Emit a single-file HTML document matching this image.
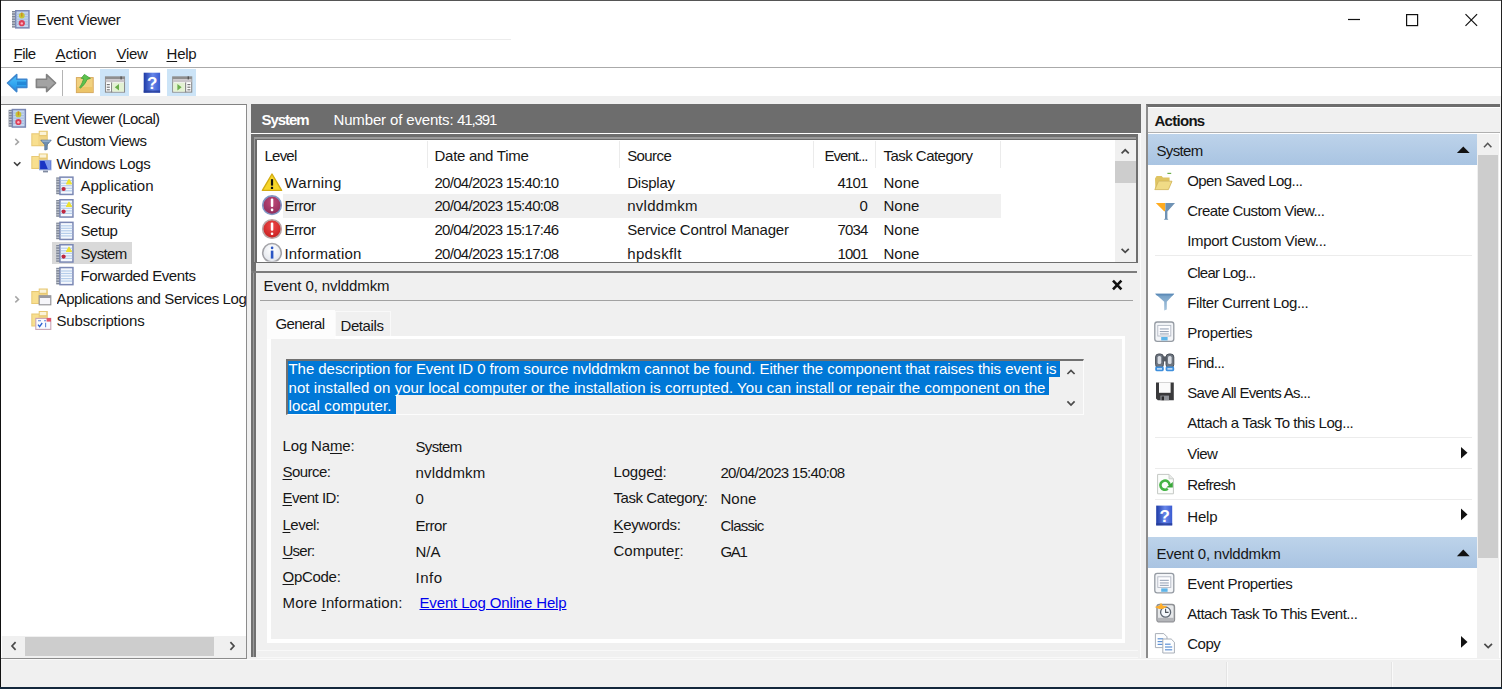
<!DOCTYPE html>
<html lang="en">
<head>
<meta charset="utf-8">
<title>Event Viewer</title>
<style>
html,body{margin:0;padding:0;}
body{width:1502px;height:689px;overflow:hidden;background:#f0f0f0;position:relative;
 font-family:"Liberation Sans",sans-serif;font-size:15px;color:#000;}
.b{position:absolute;box-sizing:border-box;}
.t{position:absolute;white-space:pre;line-height:20px;height:20px;color:#161616;}
.t u{text-decoration:underline;text-underline-offset:2px;text-decoration-thickness:1px;}
svg{position:absolute;overflow:visible;}
</style>
</head>
<body>
<div class="b" style="left:0px;top:0px;width:1502px;height:39px;background:#fff;"></div>
<div class="b" style="left:0px;top:39px;width:1502px;height:28px;background:#fff;"></div>
<div class="b" style="left:0px;top:39px;width:511px;height:1px;background:#ececec;"></div>
<div class="b" style="left:0px;top:67px;width:1502px;height:1px;background:#aaaaaa;"></div>
<div class="b" style="left:0px;top:68px;width:1502px;height:28px;background:#fff;"></div>
<div class="b" style="left:99.8px;top:69px;width:28.8px;height:27.2px;background:#cce4f7;"></div>
<div class="b" style="left:167.2px;top:69px;width:28.8px;height:27.2px;background:#cce4f7;"></div>
<div class="b" style="left:62px;top:70px;width:1px;height:26px;background:#b4b4b4;"></div>
<div class="b" style="left:1px;top:104px;width:246px;height:555px;background:#fff;border-top:1px solid #828282;border-right:1px solid #8c8c8c;border-bottom:1px solid #8c8c8c;"></div>
<div class="b" style="left:52px;top:242px;width:80px;height:22px;background:#d9d9d9;"></div>
<div class="b" style="left:2px;top:636.4px;width:244px;height:21.6px;background:#f0f0f0;"></div>
<div class="b" style="left:25px;top:636.5px;width:188.6px;height:19.4px;background:#cdcdcd;"></div>
<div class="b" style="left:251px;top:104px;width:890px;height:29px;background:#6d6d6d;"></div>
<div class="b" style="left:251px;top:133px;width:890px;height:1px;background:#fff;"></div>
<div class="b" style="left:251px;top:134px;width:886.5px;height:129px;background:#6e6e6e;"></div>
<div class="b" style="left:253.5px;top:136.6px;width:882px;height:125px;background:#9a9a9a;"></div>
<div class="b" style="left:254.8px;top:138.6px;width:881px;height:123px;background:#6b6b6b;"></div>
<div class="b" style="left:257px;top:140px;width:878.6px;height:121.6px;background:#fff;"></div>
<div class="b" style="left:283px;top:194px;width:718px;height:23.6px;background:#f0f0f0;"></div>
<div class="b" style="left:427px;top:141px;width:1px;height:27px;background:#ebebeb;"></div>
<div class="b" style="left:619px;top:141px;width:1px;height:27px;background:#ebebeb;"></div>
<div class="b" style="left:813px;top:141px;width:1px;height:27px;background:#ebebeb;"></div>
<div class="b" style="left:875px;top:141px;width:1px;height:27px;background:#ebebeb;"></div>
<div class="b" style="left:1000px;top:141px;width:1px;height:27px;background:#ebebeb;"></div>
<div class="b" style="left:1115.4px;top:140px;width:20.2px;height:121.6px;background:#f0f0f0;"></div>
<div class="b" style="left:1115.4px;top:161px;width:20.2px;height:22px;background:#cdcdcd;"></div>
<div class="b" style="left:251.2px;top:263px;width:5px;height:394px;background:#707070;"></div>
<div class="b" style="left:253px;top:272px;width:1.4px;height:385px;background:#9a9a9a;"></div>
<div class="b" style="left:251.2px;top:270.6px;width:886.3px;height:2px;background:#7c7c7c;"></div>
<div class="b" style="left:1140px;top:134px;width:1px;height:524px;background:#fafafa;"></div>
<div class="b" style="left:259.6px;top:299.6px;width:873px;height:1.7px;background:#a2a2a2;"></div>
<div class="b" style="left:266.8px;top:336.4px;width:858.4px;height:306.8px;background:#fff;"></div>
<div class="b" style="left:266.8px;top:309.6px;width:68.5px;height:29.8px;background:#fdfdfd;"></div>
<div class="b" style="left:335.3px;top:311.2px;width:56px;height:25.2px;background:#f0f0f0;border:1px solid #f9f9f9;border-bottom:none;"></div>
<div class="b" style="left:271.2px;top:339.4px;width:850.4px;height:300px;background:#f0f0f0;"></div>
<div class="b" style="left:257px;top:650px;width:881px;height:1px;background:#f8f8f8;"></div>
<div class="b" style="left:257px;top:656.6px;width:881px;height:1px;background:#f8f8f8;"></div>
<div class="b" style="left:285.6px;top:358.6px;width:798px;height:56.6px;background:#f0f0f0;border-top:2.2px solid #707070;border-left:2.4px solid #707070;border-right:1px solid #fcfcfc;border-bottom:1px solid #fcfcfc;"></div>
<div class="b" style="left:288px;top:360.8px;width:771.6px;height:15.8px;background:#0078d7;"></div>
<div class="b" style="left:288px;top:376.5px;width:760.6px;height:18.8px;background:#0078d7;"></div>
<div class="b" style="left:288px;top:395.2px;width:108.3px;height:19px;background:#0078d7;"></div>
<div class="b" style="left:1146px;top:104px;width:354px;height:554px;background:#fff;border-left:2.2px solid #8c8c8c;border-top:3px solid #6d6d6d;"></div>
<div class="b" style="left:1148px;top:107px;width:352px;height:1px;background:#fff;"></div>
<div class="b" style="left:1148px;top:108px;width:352px;height:24px;background:#f0f0f0;"></div>
<div class="b" style="left:1148px;top:131.8px;width:352px;height:1.2px;background:#b0b0b0;"></div>
<div class="b" style="left:1148px;top:133px;width:352px;height:1px;background:#fff;"></div>
<div class="b" style="left:1148px;top:134px;width:329px;height:31px;background:linear-gradient(#bdd3ea,#a9c4e2);"></div>
<div class="b" style="left:1148px;top:537px;width:329px;height:31px;background:linear-gradient(#bdd3ea,#a9c4e2);"></div>
<div class="b" style="left:1477px;top:134px;width:22px;height:524px;background:#f0f0f0;"></div>
<div class="b" style="left:1478px;top:154.5px;width:20px;height:403px;background:#cdcdcd;"></div>
<div class="b" style="left:1155px;top:255.4px;width:317px;height:1px;background:#ececec;"></div>
<div class="b" style="left:1155px;top:437.2px;width:317px;height:1px;background:#ececec;"></div>
<div class="b" style="left:1155px;top:468.2px;width:317px;height:1px;background:#ececec;"></div>
<div class="b" style="left:1155px;top:499.2px;width:317px;height:1px;background:#ececec;"></div>
<div class="b" style="left:0px;top:659px;width:1502px;height:1px;background:#fafafa;"></div>
<div class="b" style="left:1226px;top:662px;width:1px;height:25px;background:#e4e4e4;"></div>
<div class="b" style="left:1227px;top:662px;width:1px;height:25px;background:#fafafa;"></div>
<div class="b" style="left:1391px;top:662px;width:1px;height:25px;background:#e4e4e4;"></div>
<div class="b" style="left:1392px;top:662px;width:1px;height:25px;background:#fafafa;"></div>
<div class="b" style="left:0px;top:0px;width:1502px;height:1px;background:#555;"></div>
<div class="b" style="left:0px;top:0px;width:1.4px;height:689px;background:#111;"></div>
<div class="b" style="left:1501px;top:0px;width:1px;height:689px;background:#222;"></div>
<div class="b" style="left:0px;top:687.4px;width:1502px;height:1.6px;background:#14283c;"></div>
<svg width="1502" height="689" viewBox="0 0 1502 689" style="left:0;top:0;"><rect x="12" y="11" width="4.5" height="16.6" fill="#7f8796"/><rect x="12" y="12.2" width="4" height="1.1" fill="#c9ced8"/><rect x="12" y="14.8" width="4" height="1.1" fill="#c9ced8"/><rect x="12" y="17.4" width="4" height="1.1" fill="#c9ced8"/><rect x="12" y="19.9" width="4" height="1.1" fill="#c9ced8"/><rect x="12" y="22.5" width="4" height="1.1" fill="#c9ced8"/><rect x="12" y="25.1" width="4" height="1.1" fill="#c9ced8"/><rect x="15" y="10" width="14.7" height="18.6" fill="#7b88b4"/><rect x="16.5" y="11.5" width="11.7" height="15.600000000000001" fill="#c4d6ee"/><rect x="16.5" y="13.6" width="11.7" height="1.2" fill="#a9bfe2"/><rect x="16.5" y="16.1" width="11.7" height="1.2" fill="#a9bfe2"/><rect x="16.5" y="18.6" width="11.7" height="1.2" fill="#a9bfe2"/><rect x="16.5" y="21.2" width="11.7" height="1.2" fill="#a9bfe2"/><rect x="16.5" y="23.7" width="11.7" height="1.2" fill="#a9bfe2"/><circle cx="21.8" cy="15.6" r="2.9" fill="#c4c63a"/><rect x="21.1" y="12.6" width="1.4" height="4" fill="#d08a20"/><circle cx="21.8" cy="23.2" r="3.1" fill="#dc4058"/><circle cx="21.8" cy="23.4" r="1.2" fill="#ffb0c0"/>
<path d="M1348 19.5 h12" stroke="#111" stroke-width="1.2"/>
<rect x="1406.6" y="14.6" width="11" height="11" fill="none" stroke="#111" stroke-width="1.2"/>
<path d="M1465.5 14.2 l11.6 11.6 M1477.1 14.2 l-11.6 11.6" stroke="#111" stroke-width="1.2"/>
<defs><linearGradient id="gb" x1="0" y1="0" x2="0" y2="1"><stop offset="0" stop-color="#4fc3fb"/><stop offset="1" stop-color="#1c8fe6"/></linearGradient><linearGradient id="gh" x1="0" y1="0" x2="1" y2="0"><stop offset="0" stop-color="#1d3aa6"/><stop offset="0.55" stop-color="#6786ea"/><stop offset="1" stop-color="#3a5ad0"/></linearGradient><linearGradient id="gf" x1="0" y1="0" x2="0" y2="1"><stop offset="0" stop-color="#6f9cc4"/><stop offset="1" stop-color="#a9c6de"/></linearGradient></defs>
<path d="M7.5 83 L16.7 74.6 V79.2 H26.8 V87.4 H16.7 V91.6 Z" fill="url(#gb)" stroke="#3c86cf" stroke-width="1.6" stroke-linejoin="round"/>
<rect x="17" y="81.6" width="9.2" height="3.4" fill="#1470c4" opacity="0.55"/>
<path d="M55.6 83 L46.6 74.6 V79.2 H36.4 V87.4 H46.6 V91.6 Z" fill="#a3a3a3" stroke="#828282" stroke-width="1.6" stroke-linejoin="round"/>
<rect x="76.4" y="77.6" width="16.8" height="15" fill="#f1d17f" stroke="#d8a95e" stroke-width="1"/>
<rect x="76.9" y="87" width="15.8" height="5" fill="#ecc468"/>
<path d="M79.6 87.4 C82 84 83 81 83.6 78.4 L81.2 78.4 L84.4 74.4 L90.4 78.4 L87 79.4 C86 82.5 83.5 85.5 80.6 88 Z" fill="#5cc24e" stroke="#3f9e38" stroke-width="0.8" stroke-linejoin="round"/>
<rect x="105.5" y="76.9" width="19" height="15.2" fill="#fdfdfd" stroke="#8a8a8a" stroke-width="1.1"/><rect x="105.6" y="77.0" width="18.8" height="2.2" fill="#8f8f8f"/><rect x="105.6" y="79.2" width="18.8" height="3" fill="#c9c5c9"/><rect x="120.4" y="76.4" width="1.4" height="3" fill="#555"/><rect x="111" y="82.4" width="1.2" height="10" fill="#8a8a8a"/><rect x="106.8" y="84.0" width="3" height="1.2" fill="#777"/><rect x="106.8" y="86.6" width="3" height="1.2" fill="#777"/><rect x="106.8" y="89.2" width="3" height="1.2" fill="#777"/><rect x="112.4" y="82.80000000000001" width="11.6" height="8.8" fill="#e3f2d3"/><path d="M114.8 87.2 l4.2 -3.2 v6.4 z" fill="#6bae4c"/>
<rect x="172.7" y="76.9" width="19" height="15.2" fill="#fdfdfd" stroke="#8a8a8a" stroke-width="1.1"/><rect x="172.79999999999998" y="77.0" width="18.8" height="2.2" fill="#8f8f8f"/><rect x="172.79999999999998" y="79.2" width="18.8" height="3" fill="#c9c5c9"/><rect x="187.6" y="76.4" width="1.4" height="3" fill="#555"/><rect x="185.0" y="82.4" width="1.2" height="10" fill="#8a8a8a"/><rect x="187.39999999999998" y="84.0" width="3" height="1.2" fill="#777"/><rect x="187.39999999999998" y="86.6" width="3" height="1.2" fill="#777"/><rect x="187.39999999999998" y="89.2" width="3" height="1.2" fill="#777"/><rect x="173.2" y="82.80000000000001" width="11.6" height="8.8" fill="#e3f2d3"/><path d="M181.6 87.2 l-4.2 -3.2 v6.4 z" fill="#6bae4c"/>
<rect x="143.7" y="72.7" width="16.4" height="20" fill="url(#gh)"/><rect x="143.7" y="90.5" width="16.4" height="2.2" fill="#263c96" opacity="0.8"/><text x="152.29999999999998" y="89.4" text-anchor="middle" font-family="Liberation Sans, sans-serif" font-weight="bold" font-size="17" fill="#fff">?</text>
<rect x="8.6" y="109.8" width="4.5" height="17" fill="#7f8796"/><rect x="8.6" y="111.0" width="4" height="1.1" fill="#c9ced8"/><rect x="8.6" y="113.7" width="4" height="1.1" fill="#c9ced8"/><rect x="8.6" y="116.3" width="4" height="1.1" fill="#c9ced8"/><rect x="8.6" y="119.0" width="4" height="1.1" fill="#c9ced8"/><rect x="8.6" y="121.6" width="4" height="1.1" fill="#c9ced8"/><rect x="8.6" y="124.3" width="4" height="1.1" fill="#c9ced8"/><rect x="11.6" y="108.8" width="14.5" height="19" fill="#7b88b4"/><rect x="13.1" y="110.3" width="11.5" height="16" fill="#c4d6ee"/><rect x="13.1" y="112.4" width="11.5" height="1.2" fill="#a9bfe2"/><rect x="13.1" y="115.0" width="11.5" height="1.2" fill="#a9bfe2"/><rect x="13.1" y="117.6" width="11.5" height="1.2" fill="#a9bfe2"/><rect x="13.1" y="120.2" width="11.5" height="1.2" fill="#a9bfe2"/><rect x="13.1" y="122.8" width="11.5" height="1.2" fill="#a9bfe2"/><circle cx="18.4" cy="114.39999999999999" r="2.9" fill="#c4c63a"/><rect x="17.7" y="111.39999999999999" width="1.4" height="4" fill="#d08a20"/><circle cx="18.4" cy="122.0" r="3.1" fill="#dc4058"/><circle cx="18.4" cy="122.2" r="1.2" fill="#ffb0c0"/>
<path d="M15.3 138.9 l3.2 3 l-3.2 3" fill="none" stroke="#a6a6a6" stroke-width="1.5"/>
<path d="M14 162.2 l3.2 3.2 l3.2 -3.2" fill="none" stroke="#404040" stroke-width="1.6"/>
<path d="M15.3 296.4 l3.2 3 l-3.2 3" fill="none" stroke="#a6a6a6" stroke-width="1.5"/>
<path d="M31.3 133.3 h7.425 v-2.5 h9.075000000000001 v15.5 h-16.5 z" fill="#e7c873"/><rect x="32.3" y="134.3" width="6.425" height="11.0" fill="#f8df8f"/><rect x="38.725" y="136.3" width="8.075000000000001" height="9.0" fill="#f2d585"/><rect x="39.725" y="131.8" width="6.575000000000001" height="3.2" fill="#fbf3d8"/>
<path d="M40.8 140.2 h10.4 l-4 4.6 v4.6 l-2.4 0.6 v-5.2 z" fill="#6f8fb0" stroke="#4f6f94" stroke-width="0.8"/>
<path d="M41.6 140.6 h8.8 l-1 1.2 h-6.8 z" fill="#9db8d4"/>
<path d="M31.3 155.9 h7.425 v-2.5 h9.075000000000001 v15.5 h-16.5 z" fill="#e7c873"/><rect x="32.3" y="156.9" width="6.425" height="11.0" fill="#f8df8f"/><rect x="38.725" y="158.9" width="8.075000000000001" height="9.0" fill="#f2d585"/><rect x="39.725" y="154.4" width="6.575000000000001" height="3.2" fill="#fbf3d8"/>
<rect x="39.6" y="160.4" width="11.4" height="9.4" fill="#1a34c4" stroke="#8fa4d8" stroke-width="1"/>
<path d="M44.5 161 h6 v8.4 h-2.5 z" fill="#7c98ea"/>
<rect x="43" y="170.6" width="5" height="1.8" fill="#7f8aa0"/>
<rect x="56.2" y="177.4" width="4.5" height="16.8" fill="#7f8796"/><rect x="56.2" y="178.6" width="4" height="1.1" fill="#c9ced8"/><rect x="56.2" y="181.2" width="4" height="1.1" fill="#c9ced8"/><rect x="56.2" y="183.8" width="4" height="1.1" fill="#c9ced8"/><rect x="56.2" y="186.5" width="4" height="1.1" fill="#c9ced8"/><rect x="56.2" y="189.1" width="4" height="1.1" fill="#c9ced8"/><rect x="56.2" y="191.7" width="4" height="1.1" fill="#c9ced8"/><rect x="59.2" y="176.4" width="14.5" height="18.8" fill="#7b88b4"/><rect x="60.7" y="177.9" width="11.5" height="15.8" fill="#f4f8fd"/><rect x="60.7" y="180.0" width="11.5" height="1.2" fill="#b5cdea"/><rect x="60.7" y="182.6" width="11.5" height="1.2" fill="#b5cdea"/><rect x="60.7" y="185.1" width="11.5" height="1.2" fill="#b5cdea"/><rect x="60.7" y="187.7" width="11.5" height="1.2" fill="#b5cdea"/><rect x="60.7" y="190.2" width="11.5" height="1.2" fill="#b5cdea"/><path d="M69.0 179.6 l2.4 4.2 h-4.8 z" fill="#f2e628" stroke="#ece030" stroke-width="1.2" stroke-linejoin="round"/><circle cx="63.6" cy="189.0" r="2.1" fill="#c02840"/>
<rect x="56.2" y="200" width="4.5" height="16.8" fill="#7f8796"/><rect x="56.2" y="201.2" width="4" height="1.1" fill="#c9ced8"/><rect x="56.2" y="203.8" width="4" height="1.1" fill="#c9ced8"/><rect x="56.2" y="206.4" width="4" height="1.1" fill="#c9ced8"/><rect x="56.2" y="209.1" width="4" height="1.1" fill="#c9ced8"/><rect x="56.2" y="211.7" width="4" height="1.1" fill="#c9ced8"/><rect x="56.2" y="214.3" width="4" height="1.1" fill="#c9ced8"/><rect x="59.2" y="199" width="14.5" height="18.8" fill="#7b88b4"/><rect x="60.7" y="200.5" width="11.5" height="15.8" fill="#f4f8fd"/><rect x="60.7" y="202.6" width="11.5" height="1.2" fill="#b5cdea"/><rect x="60.7" y="205.2" width="11.5" height="1.2" fill="#b5cdea"/><rect x="60.7" y="207.7" width="11.5" height="1.2" fill="#b5cdea"/><rect x="60.7" y="210.3" width="11.5" height="1.2" fill="#b5cdea"/><rect x="60.7" y="212.8" width="11.5" height="1.2" fill="#b5cdea"/><path d="M69.0 202.2 l2.4 4.2 h-4.8 z" fill="#f2e628" stroke="#ece030" stroke-width="1.2" stroke-linejoin="round"/><circle cx="63.6" cy="211.6" r="2.1" fill="#c02840"/>
<rect x="56.2" y="222.6" width="4.5" height="16.6" fill="#7f8796"/><rect x="56.2" y="223.8" width="4" height="1.1" fill="#c9ced8"/><rect x="56.2" y="226.4" width="4" height="1.1" fill="#c9ced8"/><rect x="56.2" y="229.0" width="4" height="1.1" fill="#c9ced8"/><rect x="56.2" y="231.5" width="4" height="1.1" fill="#c9ced8"/><rect x="56.2" y="234.1" width="4" height="1.1" fill="#c9ced8"/><rect x="56.2" y="236.7" width="4" height="1.1" fill="#c9ced8"/><rect x="59.2" y="221.6" width="14.5" height="18.6" fill="#7b88b4"/><rect x="60.7" y="223.1" width="11.5" height="15.600000000000001" fill="#f4f8fd"/><rect x="60.7" y="225.2" width="11.5" height="1.2" fill="#b5cdea"/><rect x="60.7" y="227.7" width="11.5" height="1.2" fill="#b5cdea"/><rect x="60.7" y="230.2" width="11.5" height="1.2" fill="#b5cdea"/><rect x="60.7" y="232.8" width="11.5" height="1.2" fill="#b5cdea"/><rect x="60.7" y="235.3" width="11.5" height="1.2" fill="#b5cdea"/>
<rect x="56.2" y="245" width="4.5" height="16.8" fill="#7f8796"/><rect x="56.2" y="246.2" width="4" height="1.1" fill="#c9ced8"/><rect x="56.2" y="248.8" width="4" height="1.1" fill="#c9ced8"/><rect x="56.2" y="251.4" width="4" height="1.1" fill="#c9ced8"/><rect x="56.2" y="254.1" width="4" height="1.1" fill="#c9ced8"/><rect x="56.2" y="256.7" width="4" height="1.1" fill="#c9ced8"/><rect x="56.2" y="259.3" width="4" height="1.1" fill="#c9ced8"/><rect x="59.2" y="244" width="14.5" height="18.8" fill="#7b88b4"/><rect x="60.7" y="245.5" width="11.5" height="15.8" fill="#f4f8fd"/><rect x="60.7" y="247.6" width="11.5" height="1.2" fill="#b5cdea"/><rect x="60.7" y="250.2" width="11.5" height="1.2" fill="#b5cdea"/><rect x="60.7" y="252.7" width="11.5" height="1.2" fill="#b5cdea"/><rect x="60.7" y="255.3" width="11.5" height="1.2" fill="#b5cdea"/><rect x="60.7" y="257.8" width="11.5" height="1.2" fill="#b5cdea"/><path d="M69.0 247.2 l2.4 4.2 h-4.8 z" fill="#f2e628" stroke="#ece030" stroke-width="1.2" stroke-linejoin="round"/><circle cx="63.6" cy="256.6" r="2.1" fill="#c02840"/>
<rect x="56.2" y="267.8" width="4.5" height="16.6" fill="#7f8796"/><rect x="56.2" y="269.0" width="4" height="1.1" fill="#c9ced8"/><rect x="56.2" y="271.6" width="4" height="1.1" fill="#c9ced8"/><rect x="56.2" y="274.2" width="4" height="1.1" fill="#c9ced8"/><rect x="56.2" y="276.7" width="4" height="1.1" fill="#c9ced8"/><rect x="56.2" y="279.3" width="4" height="1.1" fill="#c9ced8"/><rect x="56.2" y="281.9" width="4" height="1.1" fill="#c9ced8"/><rect x="59.2" y="266.8" width="14.5" height="18.6" fill="#7b88b4"/><rect x="60.7" y="268.3" width="11.5" height="15.600000000000001" fill="#f4f8fd"/><rect x="60.7" y="270.4" width="11.5" height="1.2" fill="#b5cdea"/><rect x="60.7" y="272.9" width="11.5" height="1.2" fill="#b5cdea"/><rect x="60.7" y="275.4" width="11.5" height="1.2" fill="#b5cdea"/><rect x="60.7" y="278.0" width="11.5" height="1.2" fill="#b5cdea"/><rect x="60.7" y="280.5" width="11.5" height="1.2" fill="#b5cdea"/>
<path d="M31.3 291.1 h7.425 v-2.5 h9.075000000000001 v15.5 h-16.5 z" fill="#e7c873"/><rect x="32.3" y="292.1" width="6.425" height="11.0" fill="#f8df8f"/><rect x="38.725" y="294.1" width="8.075000000000001" height="9.0" fill="#f2d585"/><rect x="39.725" y="289.6" width="6.575000000000001" height="3.2" fill="#fbf3d8"/>
<rect x="39.2" y="295.8" width="11.6" height="9" fill="#f6f6fa" stroke="#8f8f93" stroke-width="1.1"/>
<rect x="39.2" y="295.8" width="11.6" height="2.2" fill="#9a9aa0"/>
<path d="M31.3 313.5 h7.425 v-2.5 h9.075000000000001 v15.5 h-16.5 z" fill="#e7c873"/><rect x="32.3" y="314.5" width="6.425" height="11.0" fill="#f8df8f"/><rect x="38.725" y="316.5" width="8.075000000000001" height="9.0" fill="#f2d585"/><rect x="39.725" y="312" width="6.575000000000001" height="3.2" fill="#fbf3d8"/>
<rect x="35.8" y="318.4" width="15" height="11" fill="#fafbff" stroke="#c9a5b5" stroke-width="1.1"/>
<rect x="46.6" y="318" width="4.4" height="3.6" fill="#e0556a"/>
<path d="M38 324.6 l1.6 2 l2.6 -3.6" fill="none" stroke="#2a5fd0" stroke-width="1.3"/>
<path d="M38 320.8 h3 M44 320.8 h2 M45.6 322.8 v4.4" stroke="#5f86d8" stroke-width="1.1"/>
<path d="M15.6 642.2 l-3.6 3.8 l3.6 3.8" fill="none" stroke="#4a4a4a" stroke-width="1.7"/>
<path d="M230.4 642.2 l3.6 3.8 l-3.6 3.8" fill="none" stroke="#4a4a4a" stroke-width="1.7"/>
<path d="M272 174 L281.6 190.4 H262.4 Z" fill="#f7d629" stroke="#d3ac12" stroke-width="1.4" stroke-linejoin="round"/>
<rect x="270.9" y="179.2" width="2.2" height="6.4" fill="#111"/><rect x="270.9" y="186.8" width="2.2" height="2.2" fill="#111"/>
<defs><radialGradient id="ge1" cx="0.5" cy="0.35" r="0.7"><stop offset="0" stop-color="#c04a78"/><stop offset="1" stop-color="#8a2a58"/></radialGradient><radialGradient id="ge2" cx="0.5" cy="0.35" r="0.7"><stop offset="0" stop-color="#ee4a4a"/><stop offset="1" stop-color="#c41a1a"/></radialGradient><radialGradient id="gi" cx="0.5" cy="0.35" r="0.7"><stop offset="0" stop-color="#ffffff"/><stop offset="1" stop-color="#dfe3ea"/></radialGradient></defs>
<circle cx="272" cy="205.2" r="9.3" fill="url(#ge1)" stroke="#7f96c4" stroke-width="1.6"/>
<rect x="270.8" y="198.6" width="2.5" height="8.4" rx="1" fill="#fff"/><rect x="270.8" y="208.6" width="2.5" height="2.6" rx="1" fill="#fff"/>
<circle cx="272" cy="229" r="9.3" fill="url(#ge2)" stroke="#b9a3a3" stroke-width="1.6"/>
<rect x="270.8" y="222.4" width="2.5" height="8.4" rx="1" fill="#fff"/><rect x="270.8" y="232.4" width="2.5" height="2.6" rx="1" fill="#fff"/>
<clipPath id="cl"><rect x="257" y="240" width="40" height="21.6"/></clipPath>
<g clip-path="url(#cl)"><circle cx="272" cy="252.8" r="9.3" fill="url(#gi)" stroke="#a3a3a8" stroke-width="1.6"/><rect x="270.8" y="250.6" width="2.6" height="8" fill="#2a56c4"/><rect x="270.8" y="246.6" width="2.6" height="2.6" rx="1.2" fill="#2a56c4"/></g>
<path d="M1121.6 153.4 l3.6 -3.6 l3.6 3.6" fill="none" stroke="#4a4a4a" stroke-width="1.7"/>
<path d="M1121.6 248.8 l3.6 3.6 l3.6 -3.6" fill="none" stroke="#4a4a4a" stroke-width="1.7"/>
<path d="M1113 280.6 l8.4 8.8 M1121.4 280.6 l-8.4 8.8" stroke="#111" stroke-width="2.6"/>
<path d="M1067.4 374 l3.6 -3.6 l3.6 3.6" fill="none" stroke="#4a4a4a" stroke-width="1.7"/>
<path d="M1067.4 401.4 l3.6 3.6 l3.6 -3.6" fill="none" stroke="#4a4a4a" stroke-width="1.7"/>
<path d="M1456.9 153 L1463.3 146.5 L1469.7 153 z" fill="#111"/>
<path d="M1456.9 556.2 L1463.3 549.6 L1469.7 556.2 z" fill="#111"/>
<path d="M1484 147.2 l3.7 -3.9 l3.7 3.9" fill="none" stroke="#555" stroke-width="1.6"/>
<path d="M1484.4 643.8 l3.8 3.8 l3.8 -3.8" fill="none" stroke="#4a4a4a" stroke-width="1.7"/>
<path d="M1461 447.0 l6.5 5.8 l-6.5 5.8 z" fill="#111"/>
<path d="M1461 508.59999999999997 l6.5 5.8 l-6.5 5.8 z" fill="#111"/>
<path d="M1461 636.1 l6.5 5.8 l-6.5 5.8 z" fill="#111"/>
<path d="M1155 178.6 l1.6 -2.6 h5 l1.4 1.6 h6.6 v3.4 h-11 l-3.2 8 z" fill="#dfc462"/>
<path d="M1158.6 181.2 h13.4 l-3.6 8.4 h-13.6 z" fill="#f0db86" stroke="#cfb150" stroke-width="0.8"/>
<rect x="1167.4" y="172.8" width="3.8" height="1.2" fill="#6ab04a"/>
<path d="M1155.8 203 h9.6 v7.2 l-1 1.2 z" fill="#ffab1f"/>
<path d="M1165.4 203 h9.6 l-7.6 8.6 v6.8 l1 1.4 h-4.6 l1.2 -1.4 v-7.6 l0.4 -0.6 z" fill="#6f92b4"/>
<path d="M1157 203.2 h17 " stroke="#f0c060" stroke-width="0.01"/>
<path d="M1155.2 293.8 h19 l-7.4 8 v7.6 l-2.6 1 v-8.6 z" fill="url(#gf)"/>
<path d="M1155.2 293.8 h19 l-1.6 1.8 h-15.8 z" fill="#5e8cb8"/>
<rect x="1154.8" y="322" width="19" height="19.4" rx="2.4" fill="#f3f5f8" stroke="#959ba3" stroke-width="1.3"/><rect x="1157.8" y="325.4" width="13" height="10.6" fill="#fdfdff" stroke="#b3b9c4" stroke-width="0.9"/><rect x="1159.8" y="328.4" width="9" height="1.1" fill="#9aa6b8"/><rect x="1159.8" y="331" width="9" height="1.1" fill="#9aa6b8"/><rect x="1159.8" y="333.4" width="9" height="1.1" fill="#9aa6b8"/><rect x="1161.2" y="337" width="6.4" height="3.4" fill="#5db4e8"/>
<rect x="1155.6" y="354" width="7.8" height="13.6" rx="3" fill="#6d7580" stroke="#4a5058" stroke-width="1"/>
<rect x="1166" y="354" width="7.8" height="13.6" rx="3" fill="#6d7580" stroke="#4a5058" stroke-width="1"/>
<rect x="1157.6" y="356" width="3.6" height="8" rx="1.6" fill="#d9dde3"/><rect x="1168" y="356" width="3.6" height="8" rx="1.6" fill="#d9dde3"/>
<rect x="1162.4" y="356.4" width="4.4" height="5" fill="#555b64"/>
<rect x="1155.2" y="366.6" width="8.6" height="4.6" rx="1.4" fill="#3f8fdc"/><rect x="1165.6" y="366.6" width="8.6" height="4.6" rx="1.4" fill="#3f8fdc"/>
<rect x="1157" y="368.2" width="5" height="1.4" fill="#d6ecff"/><rect x="1167.4" y="368.2" width="5" height="1.4" fill="#d6ecff"/>
<path d="M1156 382.4 h17.8 v17.8 h-16 l-1.8 -1.8 z" fill="#3a3a3c"/>
<rect x="1159" y="382.4" width="11.6" height="10.4" fill="#fbfbfb"/>
<rect x="1160.4" y="395.6" width="8.6" height="4.6" fill="#8f9298"/><rect x="1161.6" y="396.4" width="2.4" height="3.8" fill="#2a2a2c"/>
<path d="M1157.6 474.4 h11.4 l4.4 4.4 v15 h-15.8 z" fill="#fbfdfb" stroke="#c4c8c4" stroke-width="1"/>
<path d="M1169 474.4 v4.4 h4.4" fill="#e6e9e6" stroke="#c4c8c4" stroke-width="0.8"/>
<path d="M1169.6 485 a4.6 4.6 0 1 0 -1.8 3.8" fill="none" stroke="#45b445" stroke-width="2.6"/>
<path d="M1166.2 487.4 h6.6 v-5.4 z" fill="#3aa63a"/>
<rect x="1156.2" y="505.6" width="16" height="19.8" fill="url(#gh)"/><rect x="1156.2" y="523.1999999999999" width="16" height="2.2" fill="#263c96" opacity="0.8"/><text x="1164.6000000000001" y="522.1" text-anchor="middle" font-family="Liberation Sans, sans-serif" font-weight="bold" font-size="17" fill="#fff">?</text>
<rect x="1154.8" y="573.4" width="19" height="19.4" rx="2.4" fill="#f3f5f8" stroke="#959ba3" stroke-width="1.3"/><rect x="1157.8" y="576.8" width="13" height="10.6" fill="#fdfdff" stroke="#b3b9c4" stroke-width="0.9"/><rect x="1159.8" y="579.8" width="9" height="1.1" fill="#9aa6b8"/><rect x="1159.8" y="582.4" width="9" height="1.1" fill="#9aa6b8"/><rect x="1159.8" y="584.8" width="9" height="1.1" fill="#9aa6b8"/><rect x="1161.2" y="588.4" width="6.4" height="3.4" fill="#5db4e8"/>
<rect x="1157" y="604.4" width="17.4" height="17.4" rx="2.4" fill="#e6e8ea" stroke="#8e9094" stroke-width="1.5"/>
<rect x="1157.6" y="617.8" width="16.2" height="3.6" fill="#b3b5b9"/>
<circle cx="1165.6" cy="612.2" r="5" fill="#f4f8fc" stroke="#5f6874" stroke-width="1.3"/>
<path d="M1165.6 608.8 v3.6 h3" fill="none" stroke="#4a5058" stroke-width="1.1"/>
<path d="M1154.6 607 l4.6 -1.2 l1.8 -3 l2 3 l4.6 0.6 l-4.4 2.4 l-4 0.2 z" fill="#ffae2a"/>
<path d="M1155.4 633.6 h8.399999999999999 l3.2 3.2 v10.8 h-11.6 z" fill="#fdfeff" stroke="#a9afb8" stroke-width="1"/><rect x="1157.6000000000001" y="638.2" width="5.6" height="1.2" fill="#5f92d4"/><rect x="1157.6000000000001" y="641.0" width="7.199999999999999" height="1.2" fill="#5f92d4"/><rect x="1157.6000000000001" y="643.8000000000001" width="7.199999999999999" height="1.2" fill="#5f92d4"/>
<path d="M1162.8 639 h8.399999999999999 l3.2 3.2 v10.8 h-11.6 z" fill="#fdfeff" stroke="#a9afb8" stroke-width="1"/><rect x="1165.0" y="643.6" width="5.6" height="1.2" fill="#5f92d4"/><rect x="1165.0" y="646.4" width="7.199999999999999" height="1.2" fill="#5f92d4"/><rect x="1165.0" y="649.2" width="7.199999999999999" height="1.2" fill="#5f92d4"/></svg>
<span class="t" style="left:36.5px;top:10.44px;letter-spacing:-0.342px;">Event Viewer</span>
<span class="t" style="left:13.5px;top:43.64px;letter-spacing:-0.543px;"><u>F</u>ile</span>
<span class="t" style="left:55.5px;top:43.64px;letter-spacing:-0.117px;"><u>A</u>ction</span>
<span class="t" style="left:116.5px;top:43.64px;letter-spacing:-0.312px;"><u>V</u>iew</span>
<span class="t" style="left:166.5px;top:43.64px;letter-spacing:-0.215px;"><u>H</u>elp</span>
<span class="t" style="left:33.5px;top:108.94px;letter-spacing:-0.606px;">Event Viewer (Local)</span>
<span class="t" style="left:56.5px;top:131.44px;letter-spacing:-0.466px;">Custom Views</span>
<span class="t" style="left:56.5px;top:153.94px;letter-spacing:-0.296px;">Windows Logs</span>
<span class="t" style="left:80.5px;top:176.44px;letter-spacing:-0.036px;">Application</span>
<span class="t" style="left:80.5px;top:198.94px;letter-spacing:-0.398px;">Security</span>
<span class="t" style="left:80.5px;top:221.44px;letter-spacing:-0.441px;">Setup</span>
<span class="t" style="left:80.5px;top:243.94px;letter-spacing:-0.669px;">System</span>
<span class="t" style="left:80.5px;top:266.44px;letter-spacing:-0.421px;">Forwarded Events</span>
<span class="t" style="left:56.5px;top:288.94px;letter-spacing:-0.378px;width:189.5px;overflow:hidden;">Applications and Services Log</span>
<span class="t" style="left:56.5px;top:311.44px;letter-spacing:-0.157px;">Subscriptions</span>
<span class="t" style="left:261.5px;top:110.44px;letter-spacing:-1.062px;font-weight:bold;color:#fff;">System</span>
<span class="t" style="left:333.5px;top:110.44px;letter-spacing:-0.151px;color:#fff;">Number of events:</span>
<span class="t" style="left:456.9px;top:110.44px;letter-spacing:-1.065px;color:#fff;">41,391</span>
<span class="t" style="left:264.5px;top:146.44px;letter-spacing:-0.772px;">Level</span>
<span class="t" style="left:434.5px;top:146.44px;letter-spacing:-0.274px;">Date and Time</span>
<span class="t" style="left:627.2px;top:146.44px;letter-spacing:-0.589px;">Source</span>
<span class="t" style="left:824.5px;top:146.44px;letter-spacing:-0.982px;">Event...</span>
<span class="t" style="left:883.5px;top:146.44px;letter-spacing:-0.529px;">Task Category</span>
<span class="t" style="left:284.5px;top:172.94px;letter-spacing:0.241px;">Warning</span>
<span class="t" style="left:434.5px;top:172.94px;letter-spacing:-0.718px;">20/04/2023 15:40:10</span>
<span class="t" style="left:627.2px;top:172.94px;letter-spacing:-0.227px;">Display</span>
<span class="t" style="left:837.5px;top:172.94px;letter-spacing:-0.844px;">4101</span>
<span class="t" style="left:883.5px;top:172.94px;letter-spacing:0.035px;">None</span>
<span class="t" style="left:284.5px;top:196.44px;letter-spacing:-0.469px;">Error</span>
<span class="t" style="left:434.5px;top:196.44px;letter-spacing:-0.718px;">20/04/2023 15:40:08</span>
<span class="t" style="left:627.2px;top:196.44px;letter-spacing:0.280px;">nvlddmkm</span>
<span class="t" style="left:859.5px;top:196.44px;">0</span>
<span class="t" style="left:883.5px;top:196.44px;letter-spacing:0.035px;">None</span>
<span class="t" style="left:284.5px;top:220.44px;letter-spacing:-0.469px;">Error</span>
<span class="t" style="left:434.5px;top:220.44px;letter-spacing:-0.718px;">20/04/2023 15:17:46</span>
<span class="t" style="left:627.2px;top:220.44px;letter-spacing:-0.188px;">Service Control Manager</span>
<span class="t" style="left:837.5px;top:220.44px;letter-spacing:-0.844px;">7034</span>
<span class="t" style="left:883.5px;top:220.44px;letter-spacing:0.035px;">None</span>
<span class="t" style="left:284.5px;top:243.94px;letter-spacing:0.178px;">Information</span>
<span class="t" style="left:434.5px;top:243.94px;letter-spacing:-0.718px;">20/04/2023 15:17:08</span>
<span class="t" style="left:627.2px;top:243.94px;letter-spacing:0.362px;">hpdskflt</span>
<span class="t" style="left:837.5px;top:243.94px;letter-spacing:-0.844px;">1001</span>
<span class="t" style="left:883.5px;top:243.94px;letter-spacing:0.035px;">None</span>
<span class="t" style="left:263.5px;top:276.44px;letter-spacing:-0.092px;">Event 0, nvlddmkm</span>
<span class="t" style="left:275.5px;top:314.44px;letter-spacing:-0.625px;">General</span>
<span class="t" style="left:340.5px;top:316.44px;letter-spacing:-0.408px;">Details</span>
<span class="t" style="left:288.5px;top:359.44px;letter-spacing:-0.050px;color:#fff;">The description for Event ID 0 from source nvlddmkm cannot be found. Either the component that raises this event is</span>
<span class="t" style="left:288.5px;top:378.44px;letter-spacing:0.063px;color:#fff;">not installed on your local computer or the installation is corrupted. You can install or repair the component on the</span>
<span class="t" style="left:288.5px;top:396.44px;letter-spacing:0.141px;color:#fff;">local computer.</span>
<span class="t" style="left:282.5px;top:436.24px;letter-spacing:-0.153px;">Log Na<u>m</u>e:</span>
<span class="t" style="left:415.5px;top:437.24px;letter-spacing:-0.669px;">System</span>
<span class="t" style="left:282.5px;top:462.24px;letter-spacing:-0.529px;"><u>S</u>ource:</span>
<span class="t" style="left:415.5px;top:463.24px;letter-spacing:0.205px;">nvlddmkm</span>
<span class="t" style="left:282.5px;top:488.24px;letter-spacing:-0.523px;"><u>E</u>vent ID:</span>
<span class="t" style="left:415.5px;top:489.24px;">0</span>
<span class="t" style="left:282.5px;top:514.74px;letter-spacing:-0.505px;"><u>L</u>evel:</span>
<span class="t" style="left:415.5px;top:515.74px;letter-spacing:-0.469px;">Error</span>
<span class="t" style="left:282.5px;top:541.24px;letter-spacing:-0.769px;"><u>U</u>ser:</span>
<span class="t" style="left:415.5px;top:542.24px;letter-spacing:-0.005px;">N/A</span>
<span class="t" style="left:282.5px;top:567.24px;letter-spacing:-0.292px;"><u>O</u>pCode:</span>
<span class="t" style="left:415.5px;top:568.24px;letter-spacing:0.492px;">Info</span>
<span class="t" style="left:282.5px;top:593.24px;letter-spacing:0.144px;">More <u>I</u>nformation:</span>
<span class="t" style="left:419.5px;top:593.24px;letter-spacing:-0.148px;color:#0000ee;text-decoration:underline;">Event Log Online Help</span>
<span class="t" style="left:613.5px;top:462.24px;letter-spacing:-0.176px;">Logge<u>d</u>:</span>
<span class="t" style="left:720.5px;top:463.24px;letter-spacing:-0.718px;">20/04/2023 15:40:08</span>
<span class="t" style="left:613.5px;top:488.24px;letter-spacing:-0.432px;">Task Categor<u>y</u>:</span>
<span class="t" style="left:720.5px;top:489.24px;letter-spacing:0.035px;">None</span>
<span class="t" style="left:613.5px;top:514.74px;letter-spacing:-0.337px;"><u>K</u>eywords:</span>
<span class="t" style="left:720.5px;top:515.74px;letter-spacing:-0.763px;">Classic</span>
<span class="t" style="left:613.5px;top:541.24px;">Compute<u>r</u>:</span>
<span class="t" style="left:720.5px;top:542.24px;letter-spacing:-1.339px;">GA1</span>
<span class="t" style="left:1154.5px;top:111.44px;letter-spacing:-0.717px;font-weight:bold;">Actions</span>
<span class="t" style="left:1156.5px;top:141.44px;letter-spacing:-0.669px;">System</span>
<span class="t" style="left:1187.3px;top:171.44px;letter-spacing:-0.594px;">Open Saved Log...</span>
<span class="t" style="left:1187.3px;top:201.44px;letter-spacing:-0.569px;">Create Custom View...</span>
<span class="t" style="left:1187.3px;top:231.44px;letter-spacing:-0.355px;">Import Custom View...</span>
<span class="t" style="left:1187.3px;top:262.94px;letter-spacing:-0.796px;">Clear Log...</span>
<span class="t" style="left:1187.3px;top:292.94px;letter-spacing:-0.391px;">Filter Current Log...</span>
<span class="t" style="left:1187.3px;top:322.94px;letter-spacing:-0.338px;">Properties</span>
<span class="t" style="left:1187.3px;top:352.94px;letter-spacing:-0.670px;">Find...</span>
<span class="t" style="left:1187.3px;top:382.94px;letter-spacing:-0.694px;">Save All Events As...</span>
<span class="t" style="left:1187.3px;top:412.94px;letter-spacing:-0.454px;">Attach a Task To this Log...</span>
<span class="t" style="left:1187.3px;top:443.94px;letter-spacing:-0.562px;">View</span>
<span class="t" style="left:1187.3px;top:475.44px;letter-spacing:-0.647px;">Refresh</span>
<span class="t" style="left:1187.3px;top:506.94px;letter-spacing:-0.215px;">Help</span>
<span class="t" style="left:1156.5px;top:544.44px;letter-spacing:-0.210px;">Event 0, nvlddmkm</span>
<span class="t" style="left:1187.3px;top:574.44px;letter-spacing:-0.368px;">Event Properties</span>
<span class="t" style="left:1187.3px;top:604.44px;letter-spacing:-0.509px;">Attach Task To This Event...</span>
<span class="t" style="left:1187.3px;top:634.44px;letter-spacing:-0.508px;">Copy</span>
</body>
</html>
